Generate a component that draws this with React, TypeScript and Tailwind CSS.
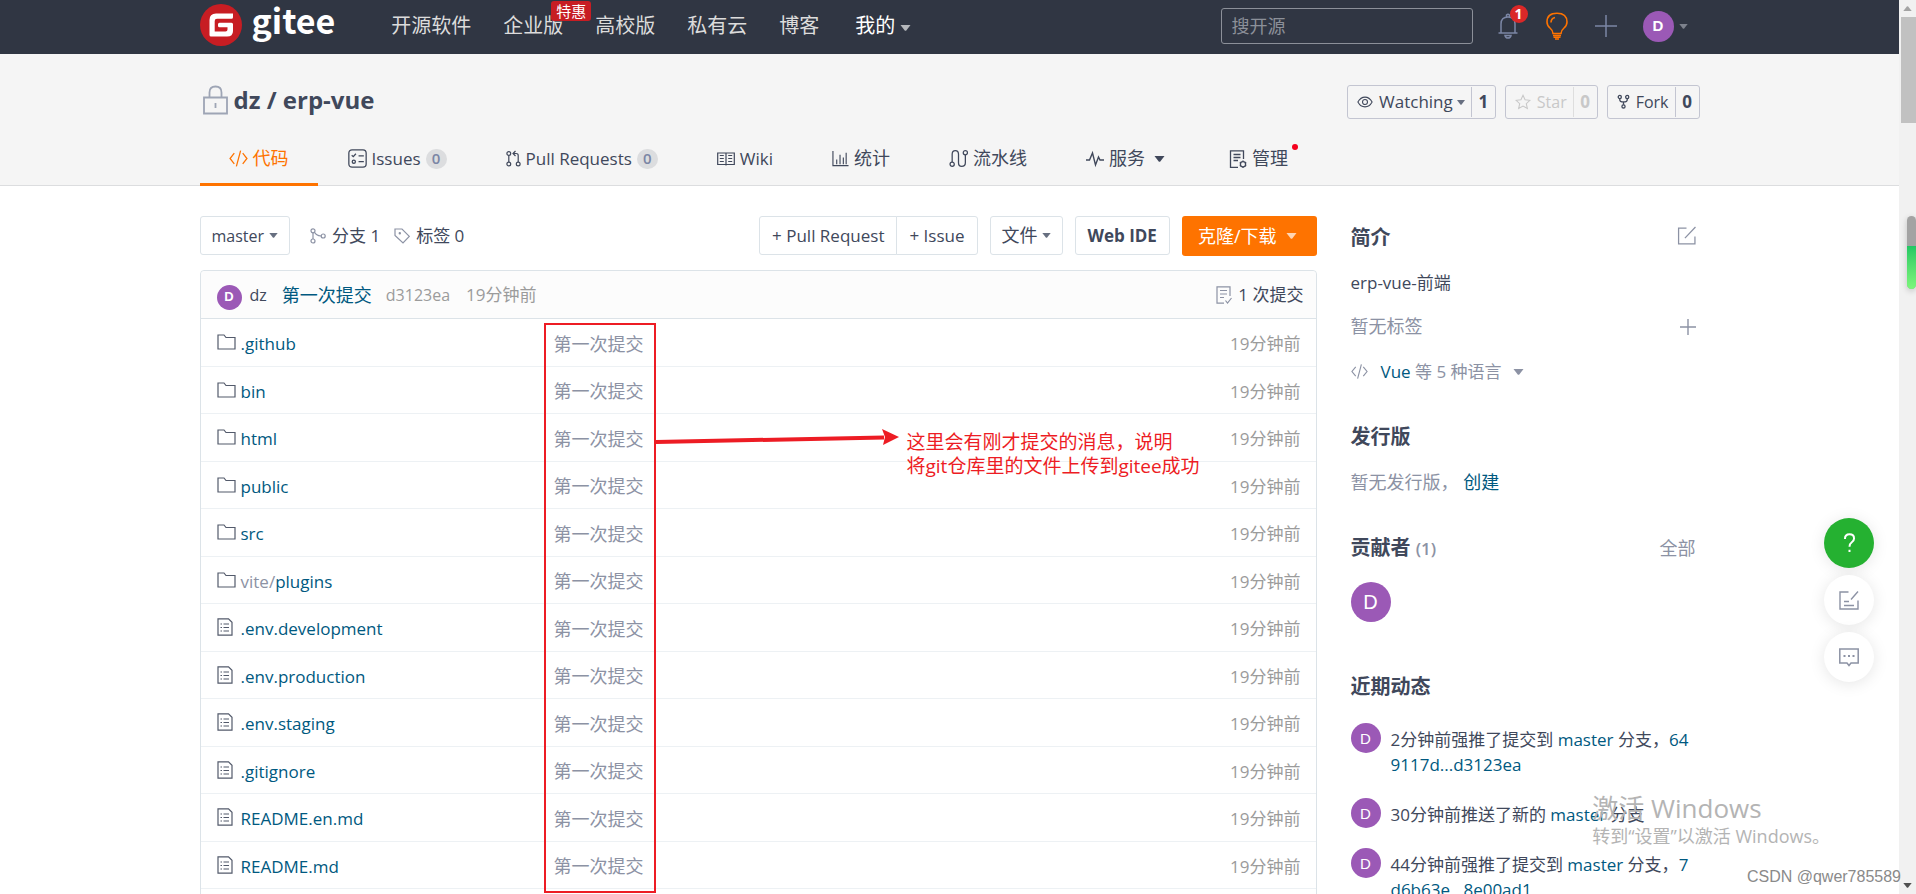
import type { ReactNode } from "react";

type IconProps = { className?: string; children?: ReactNode; box?: string; sw?: number };

function Icon({ className = "", children, box = "0 0 18 18", sw = 1.2 }: IconProps) {
  return (
    <svg viewBox={box} className={`shrink-0 ${className}`} fill="none" stroke="currentColor" strokeWidth={sw} aria-hidden="true">
      {children}
    </svg>
  );
}

function Caret({ className = "" }: { className?: string }) {
  return (
    <svg viewBox="0 0 10 6" className={`shrink-0 ${className}`} fill="currentColor" aria-hidden="true">
      <path d="M0 0H10L5.8 5.4Q5 6 4.2 5.4Z" />
    </svg>
  );
}

function Avatar({ className }: { className: string }) {
  return (
    <span className={`flex shrink-0 items-center justify-center rounded-full bg-[#9b59b6] font-['Liberation_Sans',sans-serif] text-white ${className}`}>
      D
    </span>
  );
}

function CodeIcon({ className }: { className: string }) {
  return (
    <Icon className={className}>
      <path d="M5 4L1 9L5 14M13 4L17 9L13 14M11 1.5L7 16.5" />
    </Icon>
  );
}

const navLinks = ["开源软件", "企业版", "高校版", "私有云", "博客"];

function TopBar() {
  return (
    <header className="h-[54px] bg-[#303643]">
      <div className="mx-auto flex h-full max-w-[1500px] items-center justify-between pb-[2px]">
        <div className="flex h-full items-center">
          <a href="#" className="flex h-full items-center gap-[10px] pb-[2px]" aria-label="gitee">
            <svg viewBox="0 0 42 42" className="size-[42px]" aria-hidden="true">
              <circle cx="21" cy="21" r="21" fill="#c71d23" />
              <path
                d="M33 9.5H16Q9.5 9.5 9.5 16V31Q9.5 32.6 11 32.6H27Q33 32.6 33 27V20.3Q33 18.8 31.500 18.800H19.500Q18 18.800 18 20.300V21.800Q18 23.300 19.500 23.300H27.500V25.500Q27.500 27.500 25.500 27.500H14.700V17Q14.700 14.700 17 14.700H31.500Q33 14.700 33 13.200Z"
                fill="#fff"
              />
            </svg>
            <span className="pb-[10px] font-['Noto_Sans_CJK_SC',sans-serif] text-[34px] leading-10 font-bold text-white">gitee</span>
          </a>
          <nav className="ml-14 flex h-full items-center gap-8 text-[20px] leading-7 text-[#dcdcdc]">
            {navLinks.map((label) => (
              <a key={label} href="#" className="relative">
                {label}
                {label === "企业版" && (
                  <span className="absolute -top-[11px] left-12 flex h-5 w-10 items-center justify-center rounded-[3px] bg-[#c71d23] text-[15px] text-white">
                    特惠
                  </span>
                )}
              </a>
            ))}
            <button type="button" className="ml-1 flex items-center gap-[5px] text-white">
              我的
              <Caret className="mt-1 h-[6px] w-[11px] text-[#b5b7bb]" />
            </button>
          </nav>
        </div>
        <div className="flex items-center">
          <input
            type="text"
            aria-label="搜开源"
            placeholder="搜开源"
            className="mr-[25px] h-9 w-[252px] rounded-[3px] border border-[#8c9099] bg-transparent px-[10px] text-[18px] text-white outline-none placeholder:text-[#8c9099]"
          />
          <button type="button" aria-label="通知" className="relative mr-[28px] text-[#7b86a5]">
            <Icon box="0 0 20 26" className="h-[26px] w-5" sw={1.5}>
              <path d="M0.500 20H19.500M3 20V11Q3 4 10 4Q17 4 17 11V20M8.500 3.500V2Q10 0.500 11.500 2V3.500M7 22.500Q7.500 25 10 25Q12.500 25 13 22.500Z" />
            </Icon>
            <span className="absolute -top-2 left-3 flex size-[18px] items-center justify-center rounded-full bg-[#db2828] text-[14px] leading-4 font-bold text-white">
              1
            </span>
          </button>
          <button type="button" aria-label="提示" className="mr-[27px] text-[#fe7300]">
            <Icon box="0 0 22 28" className="h-7 w-[22px]" sw={1.6}>
              <path d="M7 21.500Q7 18.500 4 16Q1 13.500 1 10Q1 1.200 11 1.200Q21 1.200 21 10Q21 13.500 18 16Q15 18.500 15 21.500ZM7 23.500H15M7.500 25.300H14.500M9 27H13M5 10.500Q5 6.500 9 5.500" />
            </Icon>
          </button>
          <button type="button" aria-label="新建" className="mr-[26px] text-[#7b86a5]">
            <Icon box="0 0 22 22" className="size-[22px]" sw={1.5}>
              <path d="M11 0V22M0 11H22" />
            </Icon>
          </button>
          <button type="button" aria-label="账户" className="mr-3 flex items-center gap-[5px] text-[#7d828d]">
            <Avatar className="size-[31px] text-[15px] font-bold" />
            <Caret className="h-[5px] w-[9px]" />
          </button>
        </div>
      </div>
    </header>
  );
}

type RepoButtonProps = { icon: ReactNode; label: string; count: number; caret?: boolean; muted?: boolean };

function RepoButton({ icon, label, count, caret, muted }: RepoButtonProps) {
  return (
    <div className={`flex h-[34px] rounded-[3px] border border-[#c3c5d1] text-base ${muted ? "text-[#c8c8c8]" : "text-[#40485b]"}`}>
      <button type="button" className="flex items-center gap-[6px] pr-[6px] pl-[9px]">
        {icon}
        <span className={`flex items-center gap-1 ${caret ? "text-[17px]" : ""}`}>
          {label}
          {caret && <Caret className="mt-px h-[5px] w-2 text-[#676f80]" />}
        </span>
      </button>
      <a href="#" className={`my-px flex w-6 items-center justify-center border-l text-[17px] font-bold ${muted ? "border-[#dedede]" : "border-[#c3c5d1]"}`}>
        {count}
      </a>
    </div>
  );
}

type Tab = { label: string; icon: ReactNode; cjk?: boolean; count?: number; caret?: boolean; dot?: boolean; active?: boolean };

const tabs: Tab[] = [
  { label: "代码", cjk: true, active: true, icon: <CodeIcon className="size-[19px]" /> },
  {
    label: "Issues",
    count: 0,
    icon: (
      <Icon className="size-[19px]">
        <rect x="0.800" y="0.800" width="16.400" height="16.400" rx="3" />
        <path d="M3.500 6L5 7.300L7.500 4.500M10 6.500H15M10 12H15" />
        <circle cx="5.500" cy="12" r="1.500" />
      </Icon>
    ),
  },
  {
    label: "Pull Requests",
    count: 0,
    icon: (
      <Icon box="0 0 15 18" className="h-[18px] w-[15px]">
        <circle cx="2.800" cy="3.500" r="1.900" />
        <circle cx="2.800" cy="14" r="1.900" />
        <circle cx="12.200" cy="14" r="1.900" />
        <path d="M2.800 5.500V12M12.200 12V5.500Q12.200 3.500 10 3.500H7.500M9.500 1L7 3.500L9.500 6" />
      </Icon>
    ),
  },
  {
    label: "Wiki",
    icon: (
      <Icon className="size-[18px]">
        <path d="M0.700 3H17.300V14.500H0.700ZM9 3V15.500M2.800 5.500H6.800M2.800 8.500H6.800M2.800 11.500H6.800M11.200 5.500H15.200M11.200 8.500H15.200M11.200 11.500H15.200" />
      </Icon>
    ),
  },
  {
    label: "统计",
    cjk: true,
    icon: (
      <Icon className="size-[17px]">
        <path d="M1 1V16.500H17.500M5 15V10M8.500 15V5M12 15V8M15 15V3" />
      </Icon>
    ),
  },
  {
    label: "流水线",
    cjk: true,
    icon: (
      <Icon className="size-[19px]">
        <circle cx="3" cy="14.500" r="2" />
        <circle cx="15.500" cy="3.500" r="2" />
        <path d="M3 12.500V5Q3 1.500 6 1.500Q9 1.500 9 5V13Q9 16.500 12 16.500Q15.500 16.500 15.500 13V5.500" />
      </Icon>
    ),
  },
  {
    label: "服务",
    cjk: true,
    caret: true,
    icon: (
      <Icon className="size-[18px]" sw={1.4}>
        <path d="M0 10H3.500L6.500 3L9.500 15L12.500 7L14 10H18" />
      </Icon>
    ),
  },
  {
    label: "管理",
    cjk: true,
    dot: true,
    icon: (
      <Icon className="size-[18px]" sw={1.3}>
        <path d="M9 17.300H1.500V0.800H14.500V9M4.500 4.500H11.500M4.500 7.500H11.500M4.500 10.500H9" />
        <circle cx="14" cy="14.200" r="2.600" />
        <path d="M14 10.500V11.500M14 17V18M10.800 12.400L11.700 12.900M16.300 15.500L17.200 16M10.800 16L11.700 15.500M16.300 12.900L17.200 12.400" />
      </Icon>
    ),
  },
];

function RepoHeader() {
  return (
    <section className="border-b border-[#dcdddf] bg-[#f5f5f5] pt-[30px]">
      <div className="mx-auto max-w-[1500px]">
        <div className="flex h-[35px] items-center justify-between">
          <h1 className="flex items-center gap-[6px] pb-1 pl-[3px] text-[24px] leading-8 font-bold text-[#40485b]">
            <Icon box="0 0 25 30" className="h-[30px] w-[25px] text-[#9ea5b5]" sw={1.800}>
              <path d="M1 12.500H24V28.500H1ZM6.500 12V7.500Q6.500 1.500 12.500 1.500Q18.500 1.500 18.500 7.500V12M12.500 18V23" />
            </Icon>
            <span>
              <a href="#">dz</a> / <a href="#">erp-vue</a>
            </span>
          </h1>
          <div className="flex gap-[9px]">
            <RepoButton
              label="Watching"
              count={1}
              caret
              icon={
                <Icon className="size-4">
                  <path d="M1 9Q4 3.500 9 3.500Q14 3.500 17 9Q14 14.500 9 14.500Q4 14.500 1 9Z" />
                  <circle cx="9" cy="9" r="2.800" />
                </Icon>
              }
            />
            <RepoButton
              label="Star"
              count={0}
              muted
              icon={
                <Icon className="size-4">
                  <path d="M9 1.500L11.300 6.500L16.800 7.100L12.700 10.800L13.900 16.300L9 13.500L4.100 16.300L5.300 10.800L1.200 7.100L6.700 6.500Z" />
                </Icon>
              }
            />
            <RepoButton
              label="Fork"
              count={0}
              icon={
                <Icon box="0 0 14 16" className="h-[15px] w-[13px]" sw={1.400}>
                  <circle cx="3" cy="3.200" r="1.700" />
                  <circle cx="11" cy="3.200" r="1.700" />
                  <circle cx="7" cy="13.300" r="1.700" />
                  <path d="M3 5V6Q3 8.500 7 8.500Q11 8.500 11 6V5M7 8.500V11.500" />
                </Icon>
              }
            />
          </div>
        </div>
        <nav className="mt-3 -mb-px flex gap-px text-[17px] text-[#40485b]">
          {tabs.map((tab) => (
            <a
              key={tab.label}
              href="#"
              className={`flex h-[55px] items-center gap-[5px] border-b-[3px] px-[29px] pt-[3px] whitespace-nowrap ${
                tab.active ? "border-[#fe7300] text-[#fe7300]" : "border-transparent"
              }`}
            >
              {tab.icon}
              <span className={`relative ${tab.cjk ? "text-[18px]" : ""}`}>
                {tab.label}
                {tab.dot && <span className="absolute -top-px -right-[10px] size-[6px] rounded-full bg-[#f5001d]" />}
              </span>
              {tab.count !== undefined && (
                <span className="flex h-5 w-[21px] items-center justify-center rounded-full bg-[#dcdddf] text-[15px] font-semibold text-[#7b86a5]">
                  {tab.count}
                </span>
              )}
              {tab.caret && <Caret className="mr-[5px] ml-1 h-[6px] w-[11px]" />}
            </a>
          ))}
        </nav>
      </div>
    </section>
  );
}

function Toolbar() {
  const outlined = "h-[39px] border border-[#dce3e8] bg-white";
  return (
    <div className="flex h-10 items-start justify-between text-[17px] text-[#40485b]">
      <div className="flex items-center">
        <button type="button" className={`${outlined} flex items-center gap-[5px] rounded-[3px] px-[11px] text-base`}>
          master
          <Caret className="h-[5px] w-[9px] text-[#676f80]" />
        </button>
        <a href="#" className="ml-5 flex items-center gap-[6px]">
          <Icon box="0 0 16 16" className="size-4 text-[#8c92a4]">
            <circle cx="3" cy="2.800" r="2" />
            <circle cx="3" cy="13" r="2" />
            <circle cx="13.200" cy="8" r="2" />
            <path d="M3 5V11M4.500 4.200Q6 7.500 11 8" />
          </Icon>
          <span>分支 1</span>
        </a>
        <a href="#" className="ml-[14px] flex items-center gap-[6px]">
          <Icon box="0 0 16 16" className="size-4 text-[#8c92a4]">
            <path d="M1 1H8L15.300 8.300L9 15L1 7.500Z" />
            <circle cx="5.800" cy="5.300" r="0.600" />
          </Icon>
          <span>标签 0</span>
        </a>
      </div>
      <div className="flex gap-3">
        <div className="flex">
          <button type="button" className={`${outlined} rounded-l-[3px] px-3`}>
            + Pull Request
          </button>
          <button type="button" className={`${outlined} -ml-px rounded-r-[3px] px-3`}>
            + Issue
          </button>
        </div>
        <button type="button" className={`${outlined} flex items-center gap-1 rounded-[3px] px-[11px] text-[18px]`}>
          文件
          <Caret className="h-[5px] w-[9px] text-[#676f80]" />
        </button>
        <button type="button" className={`${outlined} rounded-[3px] px-3 font-bold`}>
          Web IDE
        </button>
        <button type="button" className="flex h-10 items-center gap-[9px] rounded-[3px] bg-[#fe7300] px-4 pr-5 text-[18px] text-white">
          克隆/下载
          <Caret className="h-[6px] w-[11px] text-[#ffd5b3]" />
        </button>
      </div>
    </div>
  );
}

const files: { name: string; parent?: string; folder?: boolean }[] = [
  { name: ".github", folder: true },
  { name: "bin", folder: true },
  { name: "html", folder: true },
  { name: "public", folder: true },
  { name: "src", folder: true },
  { name: "plugins", parent: "vite/", folder: true },
  { name: ".env.development" },
  { name: ".env.production" },
  { name: ".env.staging" },
  { name: ".gitignore" },
  { name: "README.en.md" },
  { name: "README.md" },
];

function FileIcon({ folder }: { folder?: boolean }) {
  return folder ? (
    <Icon box="0 0 19 16" className="mb-1 h-4 w-[19px] text-[#535a6b]">
      <path d="M1 1H7L9 3.500H18V15H1Z" />
    </Icon>
  ) : (
    <Icon box="0 0 16 18" className="mr-[3px] mb-1 h-[18px] w-4 text-[#535a6b]">
      <path d="M1 0.800H11.500L15 4.300V17.200H1ZM6.500 6H12M6.500 9.500H12M6.500 13H12M3.500 6H5M3.500 9.500H5M3.500 13H5" />
    </Icon>
  );
}

function Annotation() {
  return (
    <>
      <div className="absolute top-[52px] left-[343px] h-[570px] w-[112px] border-2 border-[#ed1c24]" />
      <svg viewBox="0 0 244 20" className="absolute top-[157px] left-[455px] h-5 w-[244px]" aria-hidden="true">
        <path d="M0 14L228 9.500" stroke="#ed1c24" strokeWidth="4" />
        <path d="M243 9L226 1L229 9L227 17Z" fill="#ed1c24" />
      </svg>
      <p className="absolute top-[159px] left-[706px] text-[19px] leading-6 whitespace-nowrap text-[#ed1c24]">
        这里会有刚才提交的消息，说明
        <br />
        将git仓库里的文件上传到gitee成功
      </p>
    </>
  );
}

function FilePanel() {
  const cell = "border-b border-[#edf1f4] p-0 pt-[3px]";
  return (
    <div className="relative mt-[14px] min-h-screen rounded-t-[4px] border border-[#dce3e8]">
      <div className="flex h-12 items-center justify-between rounded-t-[4px] border-b border-[#dce3e8] bg-[#fcfcfc] pt-px pr-3 pl-4 text-base text-[#40485b]">
        <div className="flex items-center">
          <Avatar className="mt-1 size-[25px] text-[13px] font-bold" />
          <a href="#" className="ml-2">dz</a>
          <a href="#" className="ml-[15px] text-[18px] text-[#005980]">第一次提交</a>
          <a href="#" className="ml-[14px] text-[#9b9b9b]">d3123ea</a>
          <span className="ml-4 text-[17px] text-[#9b9b9b]">19分钟前</span>
        </div>
        <a href="#" className="flex items-center gap-[6px] text-[17px]">
          <Icon box="0 0 16 18" className="h-[18px] w-4 text-[#8c92a4]">
            <path d="M8 17.200H1V0.800H14V10M4 4.500H11M4 8H11M4 11.500H8M9.500 14.500L11.500 17L15.500 12" />
          </Icon>
          1 次提交
        </a>
      </div>
      <table className="w-full table-fixed border-separate border-spacing-0 text-[17px]">
        <tbody>
          {files.map((file) => (
            <tr key={file.name} className="odd:h-12 even:h-[47px]">
              <td className={`w-[353px] pl-4 ${cell}`}>
                <a href="#" className="flex items-center gap-[5px] text-[#005980]">
                  <FileIcon folder={file.folder} />
                  <span>
                    {file.parent && <span className="text-[#8c92a4]">{file.parent}</span>}
                    {file.name}
                  </span>
                </a>
              </td>
              <td className={`text-[18px] text-[#8c92a4] ${cell}`}>第一次提交</td>
              <td className={`w-[150px] text-right text-[#9b9b9b] ${cell}`}>
                <span className="mr-[15px]">19分钟前</span>
              </td>
            </tr>
          ))}
        </tbody>
      </table>
      <Annotation />
    </div>
  );
}

function Sidebar() {
  const heading = "text-[20px] leading-7 font-bold text-[#40485b]";
  const link = "text-[#005980]";
  return (
    <aside className="w-[349px] shrink-0 pt-2 text-[17px] leading-[25px] text-[#40485b]">
      <div className="flex items-center justify-between pr-1">
        <h2 className={heading}>简介</h2>
        <button type="button" aria-label="编辑" className="mb-[6px] text-[#8c92a4]">
          <Icon className="size-[19px]">
            <path d="M9 2H1.500V17H17V10M7.500 11.500L17.500 1" />
          </Icon>
        </button>
      </div>
      <p className="mt-[18px]">erp-vue-前端</p>
      <div className="mt-[19px] flex items-center justify-between pr-1 text-[18px] text-[#8c92a4]">
        <span>暂无标签</span>
        <button type="button" aria-label="添加标签">
          <Icon box="0 0 16 16" className="size-4" sw={1.400}>
            <path d="M8 0V16M0 8H16" />
          </Icon>
        </button>
      </div>
      <button type="button" className="mt-5 flex items-center text-[#8c92a4]">
        <CodeIcon className="size-[17px]" />
        <span className="ml-[13px]">
          <span className={link}>Vue</span> 等 5 种语言
        </span>
        <Caret className="ml-[11px] h-[6px] w-[11px]" />
      </button>

      <h2 className={`mt-[39px] ${heading}`}>发行版</h2>
      <p className="mt-[19px] text-[18px] text-[#8c92a4]">
        暂无发行版， <a href="#" className={link}>创建</a>
      </p>

      <div className="mt-[39px] flex items-center justify-between pr-1">
        <h2 className={heading}>
          贡献者 <span className="text-[17px] font-semibold text-[#8c92a4]">(1)</span>
        </h2>
        <a href="#" className="text-[18px] text-[#8c92a4]">全部</a>
      </div>
      <Avatar className="mt-[19px] size-10 text-[20px]" />

      <h2 className={`mt-[51px] ${heading}`}>近期动态</h2>
      <ul className="mt-[22px]">
        <li className="mb-[21px] flex gap-[10px]">
          <Avatar className="size-[30px] text-[15px]" />
          <p className="pt-1 pr-2 break-all">
            2分钟前强推了提交到 <a href="#" className={link}>master</a> 分支，
            <a href="#" className={link}>649117d...d3123ea</a>
          </p>
        </li>
        <li className="mb-5 flex gap-[10px]">
          <Avatar className="size-[30px] text-[15px]" />
          <p className="pt-1">
            30分钟前推送了新的 <a href="#" className={link}>master</a> 分支
          </p>
        </li>
        <li className="flex gap-[10px]">
          <Avatar className="size-[30px] text-[15px]" />
          <p className="pt-1 pr-2 break-all">
            44分钟前强推了提交到 <a href="#" className={link}>master</a> 分支，
            <a href="#" className={link}>7d6b63e...8e00ad1</a>
          </p>
        </li>
      </ul>
    </aside>
  );
}

function FloatingTools() {
  const round = "flex size-[50px] items-center justify-center rounded-full shadow-[0_2px_16px_rgba(0,0,0,0.1)]";
  return (
    <div className="absolute top-[518px] right-[42px] flex flex-col gap-[7px]">
      <button type="button" aria-label="帮助" className={`${round} bg-[#25b131] text-white`}>
        <Icon box="0 0 14 22" className="h-[20px] w-[13px]" sw={2.200}>
          <path d="M2 6.500Q2 1.500 7 1.500Q12 1.500 12 6Q12 8.500 9.500 10.200Q7 12 7 15.200M7 18.300V21" />
        </Icon>
      </button>
      <button type="button" aria-label="反馈" className={`${round} bg-white text-[#8c92a4]`}>
        <Icon box="0 0 20 20" className="size-5" sw={1.400}>
          <path d="M9.500 2H1V19H19V10.500M12 9.500L19 1.500M5 11.500H10M5 15.500H15" />
        </Icon>
      </button>
      <button type="button" aria-label="评论" className={`${round} bg-white text-[#8c92a4]`}>
        <Icon box="0 0 20 20" className="size-5" sw={1.500}>
          <path d="M0.800 2H19.200V16H12L10 18.500L8 16H0.800Z" />
          <path d="M4.500 9H6.500M9 9H11M13.500 9H15.500" strokeWidth="2" />
        </Icon>
      </button>
    </div>
  );
}

function ScrollRail() {
  return (
    <div className="relative flex w-[17px] shrink-0 flex-col items-center bg-[#f1f1f1]" aria-hidden="true">
      <div className="flex h-[17px] items-center">
        <Caret className="h-[5px] w-[9px] rotate-180 text-[#a3a3a3]" />
      </div>
      <div className="h-[106px] w-full pl-[2px]">
        <div className="h-full bg-[#c1c1c1]" />
      </div>
      <div className="mt-auto flex h-[17px] items-center">
        <Caret className="h-[5px] w-[9px] text-[#505050]" />
      </div>
      <div className="absolute top-[216px] right-0 h-[73px] w-[9px] overflow-hidden rounded-full bg-[#a3a3a3] shadow-[0_2px_6px_rgba(0,0,0,0.2)]">
        <div className="mt-[30px] h-[43px] bg-linear-to-b from-[#1fc864] to-[#7cf77c]" />
      </div>
    </div>
  );
}

export default function App() {
  return (
    <div className="relative flex h-screen overflow-hidden bg-white font-['Open_Sans','Noto_Sans_CJK_SC',sans-serif]">
      <div className="min-w-0 flex-1">
        <TopBar />
        <RepoHeader />
        <main className="mx-auto flex max-w-[1500px] gap-[34px] pt-[30px]">
          <div className="min-w-0 flex-1">
            <Toolbar />
            <FilePanel />
          </div>
          <Sidebar />
        </main>
      </div>
      <ScrollRail />
      <FloatingTools />
      <div className="pointer-events-none absolute right-[86px] bottom-[46px] text-[#b4b4b4]">
        <p className="text-[26px] leading-8">激活 Windows</p>
        <p className="text-[18px] leading-6">转到“设置”以激活 Windows。</p>
      </div>
      <p className="pointer-events-none absolute right-[15px] bottom-[5px] font-['Liberation_Sans',sans-serif] text-[16px] leading-6 text-[#8a8a8a]">
        CSDN @qwer785589
      </p>
    </div>
  );
}
